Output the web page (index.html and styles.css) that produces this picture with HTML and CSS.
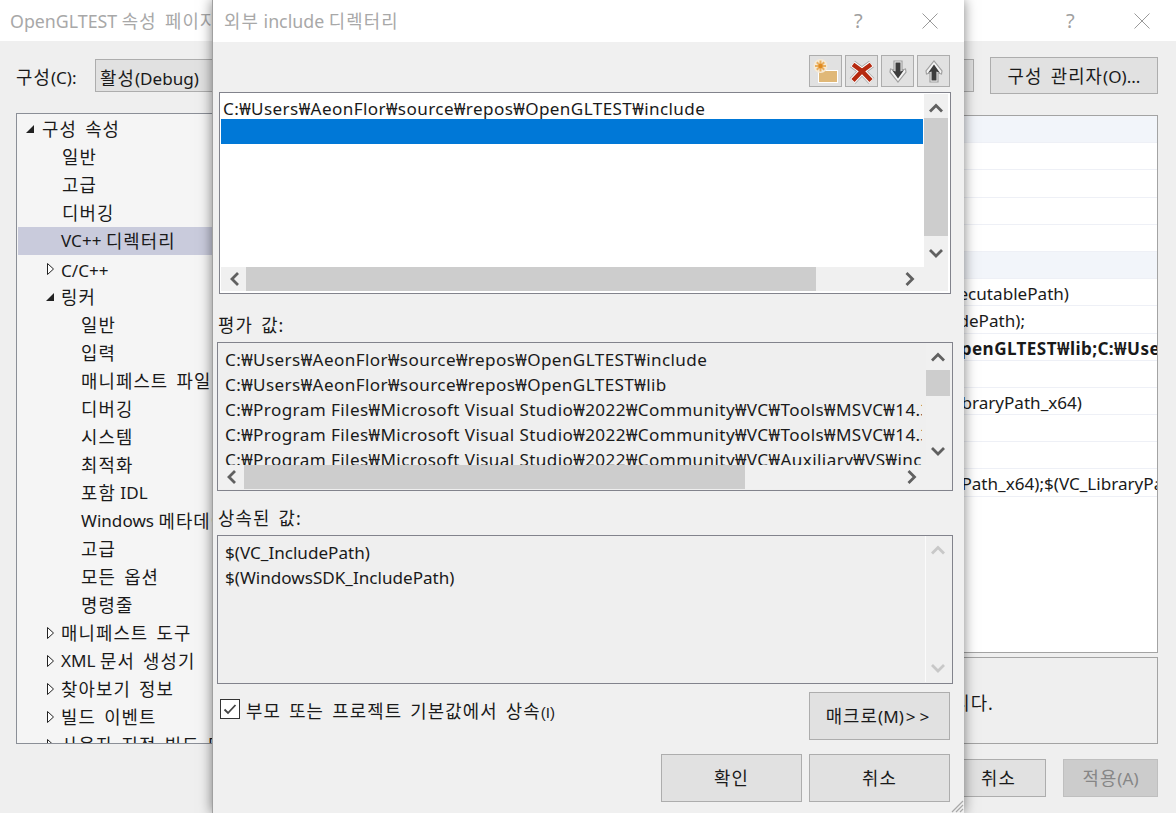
FILE: index.html
```html
<!DOCTYPE html>
<html lang="ko">
<head>
<meta charset="utf-8">
<title>OpenGLTEST 속성 페이지</title>
<link rel="stylesheet" href="styles.css">
</head>
<body>
<svg class="defs" width="0" height="0">
  <symbol id="up" viewBox="0 0 24 24"><path d="M6 17.500 12 11.500l6 6" fill="none" stroke="currentColor" stroke-width="2.800"/></symbol>
  <symbol id="down" viewBox="0 0 24 24"><path d="M6 7 12 13l6-6" fill="none" stroke="currentColor" stroke-width="2.800"/></symbol>
  <symbol id="left" viewBox="0 0 24 24"><path d="M17 6 11 12l6 6" fill="none" stroke="currentColor" stroke-width="2.800"/></symbol>
  <symbol id="right" viewBox="0 0 24 24"><path d="M6.500 6l6 6-6 6" fill="none" stroke="currentColor" stroke-width="2.800"/></symbol>
  <symbol id="open" viewBox="0 0 10 10"><path d="M9 1v8H1z" fill="#222"/></symbol>
  <symbol id="closed" viewBox="0 0 10 14"><path d="M2.500 1.500v11L8.500 7z" fill="#fff" stroke="#222" stroke-width="1"/></symbol>
</svg>

<main class="window">
  <header class="titlebar">
    <span class="title">OpenGLTEST <span class="k">속성 페이지</span></span>
    <span class="caption">
      <span class="help">?</span>
      <svg class="close" width="16" height="16" viewBox="0 0 16 16"><path d="M.5.5l15 15M15.500.5l-15 15" stroke="#9a9a9a" stroke-width="1" fill="none"/></svg>
    </span>
  </header>
  <div class="config">
    <span class="config-label"><span class="k">구성</span>(C):</span>
    <span class="combo combo-config"><span class="k">활성</span>(Debug)</span>
    <span class="combo combo-platform"></span>
    <button class="btn btn-manager" type="button"><span class="k">구성 관리자</span>(O)...</button>
  </div>
  <div class="panes">
    <ul class="tree">
      <li class="node l0"><svg class="tw open" width="10" height="10"><use href="#open"/></svg><span class="k">구성 속성</span></li>
      <li class="node l1 k">일반</li>
      <li class="node l1 k">고급</li>
      <li class="node l1 k">디버깅</li>
      <li class="node l1 selected">VC++&nbsp;<span class="k">디렉터리</span></li>
      <li class="node l1x nudge"><svg class="tw" width="10" height="14"><use href="#closed"/></svg>C/C++</li>
      <li class="node l1x"><svg class="tw open" width="10" height="10"><use href="#open"/></svg><span class="k">링커</span></li>
      <li class="node l2 k">일반</li>
      <li class="node l2 k">입력</li>
      <li class="node l2 k">매니페스트 파일</li>
      <li class="node l2 k">디버깅</li>
      <li class="node l2 k">시스템</li>
      <li class="node l2 k">최적화</li>
      <li class="node l2"><span class="k">포함</span>&nbsp;IDL</li>
      <li class="node l2">Windows&nbsp;<span class="k">메타데이터</span></li>
      <li class="node l2 k">고급</li>
      <li class="node l2 k">모든 옵션</li>
      <li class="node l2 k">명령줄</li>
      <li class="node l1x"><svg class="tw" width="10" height="14"><use href="#closed"/></svg><span class="k">매니페스트 도구</span></li>
      <li class="node l1x"><svg class="tw" width="10" height="14"><use href="#closed"/></svg>XML&nbsp;<span class="k">문서 생성기</span></li>
      <li class="node l1x"><svg class="tw" width="10" height="14"><use href="#closed"/></svg><span class="k">찾아보기 정보</span></li>
      <li class="node l1x"><svg class="tw" width="10" height="14"><use href="#closed"/></svg><span class="k">빌드 이벤트</span></li>
      <li class="node l1x"><svg class="tw" width="10" height="14"><use href="#closed"/></svg><span class="k">사용자 지정 빌드 단계</span></li>
    </ul>
    <div class="side">
      <div class="grid">
        <div class="prow band"></div>
        <div class="prow"></div>
        <div class="prow"></div>
        <div class="prow"></div>
        <div class="prow"></div>
        <div class="prow band"></div>
        <div class="prow"><span class="val e1">$(VC_ExecutablePath_x64);$(CommonExecutablePath)</span></div>
        <div class="prow"><span class="val e2">$(VC_IncludePath);$(WindowsSDK_IncludePath);</span></div>
        <div class="prow"><span class="val e3 strong path">C:₩Users₩AeonFlor₩source₩repos₩OpenGLTEST₩lib;C:₩Users₩AeonFlor</span></div>
        <div class="prow"></div>
        <div class="prow"><span class="val e4">$(VC_LibraryPath_x64)</span></div>
        <div class="prow"></div>
        <div class="prow"></div>
        <div class="prow"><span class="val e5">$(VC_ReferencePath_x64);$(VC_LibraryPath</span></div>
      </div>
      <div class="desc k">포함 파일을 검색하는 경로입니다.</div>
    </div>
  </div>
  <footer class="actions">
    <button class="btn act" type="button"><span class="k">취소</span></button>
    <button class="btn act act-apply" type="button" disabled><span class="k">적용</span>(A)</button>
  </footer>
</main>

<section class="dialog">
  <header class="d-title">
    <span class="title"><span class="k">외부</span> include <span class="k">디렉터리</span></span>
    <span class="caption">
      <span class="help">?</span>
      <svg class="close" width="16" height="16" viewBox="0 0 16 16"><path d="M.5.5l15 15M15.500.5l-15 15" stroke="#9a9a9a" stroke-width="1" fill="none"/></svg>
    </span>
  </header>

  <div class="toolbar">
    <button class="tool" type="button" aria-label="새 줄">
      <svg width="26" height="26" viewBox="0 0 26 26">
        <path d="M5 10h6l2 2h12v13H5z" fill="#fff"/>
        <path d="M6 11h4.500l2 2H24v11H6z" fill="#e0b878"/>
        <circle cx="7.500" cy="8" r="7" fill="#f6ead6"/>
        <path d="M7.500 2.500v11M2 8h11M3.800 4.300l7.400 7.400M11.200 4.300l-7.400 7.400" stroke="#eab060" stroke-width="2"/>
        <circle cx="7.500" cy="8" r="2.200" fill="#e08a20"/>
      </svg>
    </button>
    <button class="tool" type="button" aria-label="삭제">
      <svg width="26" height="26" viewBox="0 0 26 26">
        <path d="M3.500 6 13 13l9.500-7M13 13 3.500 23M13 13l9.500 10" stroke="#a8a8a8" stroke-width="8" fill="none"/>
        <path d="M3.500 6 13 13l9.500-7M13 13 3.500 23M13 13l9.500 10" stroke="#fff" stroke-width="6.500" fill="none"/>
        <path d="M4 6.500 13 13l9-6.500M13 13l-9 9.500M13 13l9 9.500" stroke="#b5290f" stroke-width="4.400" fill="none"/>
      </svg>
    </button>
    <button class="tool" type="button" aria-label="아래로">
      <svg width="26" height="26" viewBox="0 0 26 26">
        <path d="M9 3h8v9l3.500-1 .5 3-8 10-8-10 .5-3 3.500 1z" fill="#f4f4f4" stroke="#a0a0a0" stroke-width="1.200"/>
        <path d="M10.500 4.500h5v9l3.500-1.500-6 8.500-6-8.500 3.500 1.500z" fill="#3c3c3c"/>
      </svg>
    </button>
    <button class="tool" type="button" aria-label="위로">
      <svg width="26" height="26" viewBox="0 0 26 26">
        <path d="M9 24h8v-9l3.500 1 .5-3-8-10-8 10 .5 3 3.500-1z" fill="#f4f4f4" stroke="#a0a0a0" stroke-width="1.200"/>
        <path d="M10.500 22.500h5v-9l3.500 1.500-6-8.500-6 8.500 3.500-1.500z" fill="#3c3c3c"/>
      </svg>
    </button>
  </div>

  <div class="sbox edit">
    <div class="lines">
      <div class="line path">C:₩Users₩AeonFlor₩source₩repos₩OpenGLTEST₩include</div>
      <div class="line sel"></div>
    </div>
    <div class="vbar">
      <svg class="arrow" width="24" height="24"><use href="#up"/></svg>
      <div class="track"><div class="vthumb t1"></div></div>
      <svg class="arrow" width="24" height="24"><use href="#down"/></svg>
    </div>
    <div class="hbar">
      <svg class="arrow" width="24" height="24"><use href="#left"/></svg>
      <div class="track htrack"><div class="hthumb t2"></div></div>
      <svg class="arrow" width="24" height="24"><use href="#right"/></svg>
    </div>
    <div class="corner"></div>
  </div>

  <label class="lab lab1 k">평가 값:</label>
  <div class="sbox ro">
    <div class="lines">
      <div class="line path">C:₩Users₩AeonFlor₩source₩repos₩OpenGLTEST₩include</div>
      <div class="line path">C:₩Users₩AeonFlor₩source₩repos₩OpenGLTEST₩lib</div>
      <div class="line path">C:₩Program Files₩Microsoft Visual Studio₩2022₩Community₩VC₩Tools₩MSVC₩14.34.31933₩include</div>
      <div class="line path">C:₩Program Files₩Microsoft Visual Studio₩2022₩Community₩VC₩Tools₩MSVC₩14.34.31933₩atlmfc₩include</div>
      <div class="line path">C:₩Program Files₩Microsoft Visual Studio₩2022₩Community₩VC₩Auxiliary₩VS₩include</div>
    </div>
    <div class="vbar">
      <svg class="arrow" width="24" height="24"><use href="#up"/></svg>
      <div class="track"><div class="vthumb t3"></div></div>
      <svg class="arrow" width="24" height="24"><use href="#down"/></svg>
    </div>
    <div class="hbar">
      <svg class="arrow" width="24" height="24"><use href="#left"/></svg>
      <div class="track htrack"><div class="hthumb t4"></div></div>
      <svg class="arrow" width="24" height="24"><use href="#right"/></svg>
    </div>
    <div class="corner"></div>
  </div>

  <label class="lab lab2 k">상속된 값:</label>
  <div class="sbox inh">
    <div class="lines">
      <div class="line">$(VC_IncludePath)</div>
      <div class="line">$(WindowsSDK_IncludePath)</div>
    </div>
    <div class="vbar disabled">
      <svg class="arrow" width="24" height="24"><use href="#up"/></svg>
      <div class="track"></div>
      <svg class="arrow" width="24" height="24"><use href="#down"/></svg>
    </div>
  </div>

  <div class="inherit-row">
    <span class="check">
      <svg width="18" height="18" viewBox="0 0 18 18"><path d="M3.500 9.500 7 13l7.500-8" fill="none" stroke="#444" stroke-width="1.800"/></svg>
    </span>
    <span class="check-label"><span class="k">부모 또는 프로젝트 기본값에서 상속</span><span class="small">(I)</span></span>
    <button class="btn big" type="button"><span class="k">매크로</span>(M)<span class="gts">&gt;&gt;</span></button>
  </div>

  <div class="d-actions">
    <button class="btn big" type="button"><span class="k">확인</span></button>
    <button class="btn big" type="button"><span class="k">취소</span></button>
  </div>

  <svg class="grip" width="14" height="14" viewBox="0 0 14 14"><path d="M13 2 2 13M13 6l-7 7M13 10l-3 3" stroke="#a8a8a8" stroke-width="1.200" fill="none"/></svg>
</section>
</body>
</html>
```
FILE: styles.css
```css
* { box-sizing: border-box; }
html, body { margin: 0; padding: 0; }
body {
  position: relative;
  width: 1176px;
  height: 813px;
  overflow: hidden;
  background: #f0f0f0;
  color: #1a1a1a;
  font: 17.1px/20px "Noto Sans", "Noto Sans CJK KR", sans-serif;
}
.defs { position: absolute; }
ul { list-style: none; margin: 0; padding: 0; }

/* Korean runs: larger and wider tracking, like the system UI face */
.k { font-size: 17.8px; letter-spacing: 1.1px; word-spacing: 2.5px; }
/* Paths: the won sign is wider in the system UI face */
.path { letter-spacing: .41px; }

/* Windows */
.window {
  position: absolute;
  left: 0;
  top: 0;
  width: 1176px;
  height: 813px;
  background: #efefef;
}
.titlebar, .d-title {
  display: flex;
  align-items: center;
  justify-content: space-between;
  background: #fff;
  color: #a8a8a8;
}
.titlebar { height: 41px; padding: 0 26px 0 10px; }
.d-title { height: 42px; padding: 0 26px 0 11px; }
.title { font-size: 17.800px; white-space: nowrap; }
.caption { display: flex; align-items: center; gap: 58px; }
.help { width: 10px; font-size: 20px; color: #a0a0a0; }

.config {
  display: flex;
  align-items: center;
  height: 37px;
  margin: 16px 18px 0 16px;
}
.config-label { width: 79px; padding-top: 4px; }
.combo {
  height: 33px;
  padding: 0 4px;
  line-height: 36px;
  background: #e1e1e1;
  border: 1px solid #adadad;
}
.combo-config { width: 400px; }
.combo-platform { width: 380px; margin-left: 99px; }
.btn {
  background: #e1e1e1;
  border: 1px solid #adadad;
  border-radius: 0;
  color: #1a1a1a;
  font: inherit;
  padding: 0;
}
.btn[disabled] { background: #ccc; border-color: #bfbfbf; color: #868686; }
.btn-manager { width: 168px; height: 37px; margin-left: 16px; padding-top: 2px; }

.panes {
  display: flex;
  gap: 10px;
  height: 631px;
  margin: 19px 18px 0 16px;
}
.tree {
  width: 384px;
  height: 631px;
  overflow: hidden;
  background: #f5f5f5;
  border: 1px solid #8b8f97;
  padding-top: 1px;
}
.node {
  display: flex;
  align-items: center;
  position: relative;
  height: 28px;
  white-space: pre;
}
.l0 { padding-left: 25px; }
.l1 { padding-left: 45px; }
.l1x { padding-left: 44px; }
.l2 { padding-left: 64px; }
.nudge { padding-top: 3px; }
.selected { background: #c9cbdc; margin-left: 1px; padding-left: 43px; }
.tw { position: absolute; left: 27px; top: 7px; }
.tw.open { left: 8px; top: 9px; }
.l1x .tw { left: 28px; }
.l1x .tw.open { left: 28px; }

.side { flex: 1; display: flex; flex-direction: column; gap: 4px; }
.grid {
  height: 540px;
  margin-top: 2px;
  background: #fff;
  border: 1px solid #a3a3a3;
  overflow: hidden;
}
.prow {
  display: flex;
  justify-content: flex-end;
  height: 27.2px;
  line-height: 30px;
  border-bottom: 1px solid #eef0f6;
  overflow: hidden;
  white-space: nowrap;
}
.band { background: #f2f5fa; }
.val { flex: none; }
.strong { font-weight: 700; }
.e1 { margin-right: 88px; }
.e2 { margin-right: 132px; }
.e3 { margin-right: -113px; }
.e4 { margin-right: 75px; }
.e5 { margin-right: -23px; }
.desc {
  height: 87px;
  padding: 35px 163px 0 8px;
  border: 1px solid #a3a3a3;
  white-space: nowrap;
  display: flex;
  justify-content: flex-end;
}

.actions {
  display: flex;
  justify-content: flex-end;
  gap: 17px;
  height: 38px;
  margin: 15px 18px 0 0;
}
.act { width: 95px; }

/* Dialog */
.dialog {
  position: absolute;
  left: 212px;
  top: 0;
  width: 752px;
  height: 813px;
  background: #f0f0f0;
  border-left: 1px solid #a0a0a0;
  box-shadow: 0 0 12px rgba(0, 0, 0, .5);
}
.toolbar {
  display: flex;
  justify-content: flex-end;
  gap: 3px;
  height: 32px;
  margin: 13px 14px 0 0;
}
.tool {
  display: flex;
  align-items: center;
  justify-content: center;
  width: 33px;
  height: 32px;
  padding: 0;
  background: #e1e1e1;
  border: 1px solid #adadad;
}

.sbox {
  display: grid;
  grid-template-columns: 1fr 24px;
  grid-template-rows: 1fr 24px;
  border: 1px solid #82838c;
  overflow: hidden;
}
.edit {
  width: 732px;
  height: 202px;
  margin: 5px 0 0 6px;
  padding: 1px 2px 2px 1px;
  background: #fff;
}
.ro, .inh {
  width: 736px;
  height: 149px;
  margin: 7px 0 0 4px;
  padding: 0 2px 1px 0;
  background: #efefef;
}
.lines { overflow: hidden; min-width: 0; white-space: nowrap; }
.edit .lines { background: #fff; margin-right: 1px; }
.ro .lines, .inh .lines { padding: 4px 0 0 7px; margin-right: 4px; }
.inh .lines { grid-row: 1 / span 2; border-right: 1px solid #fbfbfb; margin-right: 0; }
.line { height: 25px; line-height: 25px; padding-left: 2px; }
.edit .line { line-height: 30px; }
.ro .line, .inh .line { padding-left: 0; }
.sel { background: #0078d7; }

.vbar { display: flex; flex-direction: column; background: #f0f0f0; color: #606060; }
.hbar { display: flex; background: #f0f0f0; color: #606060; }
.arrow { flex: none; display: block; }
.track { flex: 1; min-height: 0; min-width: 0; }
.vthumb { width: 100%; background: #cdcdcd; }
.hthumb { height: 100%; background: #cdcdcd; }
.t1 { height: 118px; }
.t3 { height: 26px; margin-top: 3px; }
.t2 { width: 570px; margin-left: 1px; }
.t4 { width: 501px; margin-left: 2px; }
.corner { background: #f0f0f0; }
.disabled { grid-column: 2; grid-row: 1 / span 2; color: #c8c8c8; background: #efefef; }

.lab { display: block; height: 20px; margin-left: 5px; }
.lab1 { margin-top: 21px; }
.lab2 { margin-top: 17px; }

.inherit-row {
  display: flex;
  align-items: flex-start;
  height: 48px;
  margin: 8px 14px 0 7px;
}
.check {
  display: flex;
  align-items: center;
  justify-content: center;
  width: 20px;
  height: 20px;
  margin-top: 7px;
  background: #fff;
  border: 1px solid #333;
}
.check-label { margin: 9px 0 0 6px; white-space: nowrap; }
.small { font: 15px/20px "Liberation Sans", sans-serif; }
.gts { letter-spacing: 4px; margin-left: 2px; }
.big { width: 141px; height: 48px; }
.inherit-row .big { margin-left: auto; }
.d-actions {
  display: flex;
  justify-content: flex-end;
  gap: 7px;
  margin: 14px 14px 0 0;
}
.grip { position: absolute; right: 0; bottom: 0; }
```
